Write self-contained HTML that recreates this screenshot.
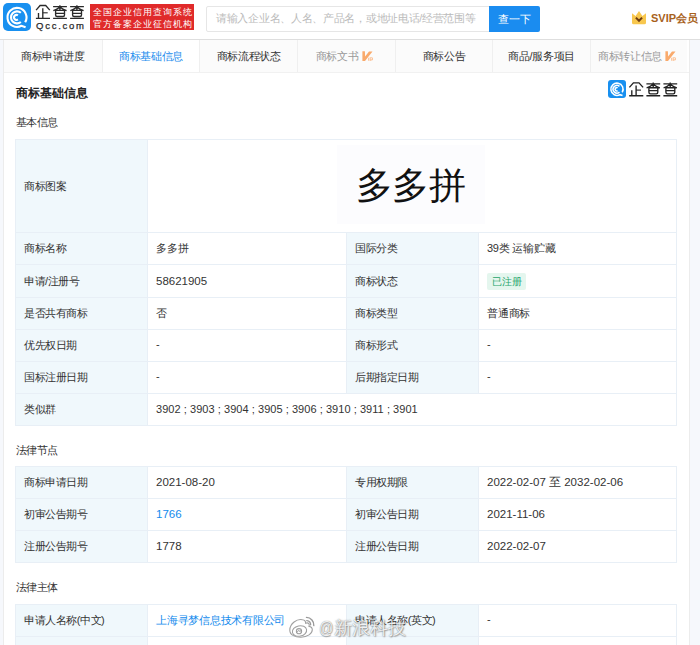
<!DOCTYPE html>
<html><head><meta charset="utf-8">
<style>
*{box-sizing:border-box;margin:0;padding:0}
html,body{width:700px;height:645px;overflow:hidden}
body{background:#f6f8fc;font-family:"Liberation Sans",sans-serif;color:#333;position:relative}
.abs{position:absolute}
#hdr{left:0;top:0;width:700px;height:40px;background:#fff;border-bottom:1px solid #dedede}
#logo{left:3px;top:3px;width:28px;height:28px;background:#1890f0;border-radius:5px}
#brand{left:36px;top:3px;font-size:15px;letter-spacing:1px;color:#222;line-height:17px}
#qcc{left:36px;top:21px;font-size:9.5px;letter-spacing:1.75px;color:#2a2a2a;line-height:10px;font-weight:normal;-webkit-text-stroke:0.25px #2a2a2a}
#red{left:90px;top:4px;width:104px;height:26px;background:#e02a2a;color:#fff;font-size:9px;line-height:12px;padding:2px 0 0 3px;letter-spacing:1px;white-space:nowrap}
#search{left:206px;top:6px;width:284px;height:26px;border:1px solid #e6e6e6;border-radius:2px 0 0 2px;font-size:10.7px;letter-spacing:-0.3px;color:#bbb;line-height:22.5px;padding-left:9px;white-space:nowrap;overflow:hidden}
#btn{left:489px;top:6px;width:51px;height:26px;background:#1a8cf0;border-radius:0 2px 2px 0;color:#fff;font-size:11px;line-height:26px;text-align:center}
#svip{left:651px;top:12px;font-size:11px;font-weight:bold;color:#a8621c;line-height:13px;white-space:nowrap}
#card{left:3px;top:40px;width:687px;height:620px;background:#fff;border-left:1px solid #ececec;border-right:1px solid #ececec}
#tabs{left:4px;top:40px;width:685px;height:33px;border-bottom:1px solid #f1f1f1;display:flex}
.tab{flex:none;width:97.65px;height:32px;background:#fbfbfb;border-left:1px solid #efefef;font-size:11px;letter-spacing:-0.35px;text-align:center;line-height:32px;color:#333;white-space:nowrap}
.tab:first-child{border-left:none}
.tab.on{background:#fff;color:#1a8ced}
.tab.dis{color:#999;padding-right:4px}
.v{display:inline-block;width:11px;height:10px;vertical-align:-1px;margin-left:3.5px}
#title{left:16px;top:85px;font-size:12px;font-weight:bold;color:#222;line-height:16px}
.sec{left:15.5px;font-size:11px;color:#333;line-height:14px;letter-spacing:-0.4px}
.tbl{left:15px;width:662px;border-top:1px solid #e8eff6;border-left:1px solid #e8eff6}
.row{display:flex;border-bottom:1px solid #e8eff6}
.c{border-right:1px solid #e8eff6;font-size:11px;letter-spacing:-0.45px;padding-left:8px;display:flex;align-items:center;white-space:nowrap;color:#333}
.lb{background:#f0f8fc;width:132px}
.vl{width:199px;padding-left:8px;letter-spacing:-0.25px}
.lb2{width:132px}
.vl2{flex:1;padding-left:8px;letter-spacing:-0.25px}
.link{color:#128bed}
.d{position:relative;top:-1.5px}
.n{font-size:11.5px;position:relative;top:-0.5px;letter-spacing:0}
.badge{background:#e4f6ee;color:#1fa56b;font-size:10px;padding:0 5px;height:17px;line-height:17px;border-radius:2px}
#wm{left:319px;top:615.5px;font-size:18px;line-height:24px;color:rgba(255,255,255,0.88);text-shadow:0 0 1.2px rgba(0,0,0,0.5),0.6px 0.8px 1.2px rgba(0,0,0,0.3);white-space:nowrap}
</style></head><body>
<div id="hdr" class="abs"></div>
<div id="logo" class="abs"><svg width="28" height="28" viewBox="3 3 28 28" style="display:block"><g fill="none" stroke="#fff" stroke-width="2.1" stroke-linecap="butt"><path d="M25.14 22.29 A9.5 9.5 0 1 0 21.46 25.79 L25.6 27.2"/><path d="M20.86 12.8 A6 6 0 1 0 20.86 22"/><path d="M17.93 15.35 A2.5 2.5 0 1 0 17.93 19.45"/></g></svg></div>
<svg class="abs" style="left:0;top:0" width="90" height="22" viewBox="0 0 90 22"><g fill="none" stroke="#2a2a2a" stroke-width="1.35"><path d="M36.1 10.1 L40.1 5.5 H45.7 L49.8 10.1"/><path d="M42.8 8.2 V18.4 M38.5 13 V18.4 M35.9 18.4 H50"/><path d="M42.8 12.8 H47.7" stroke-width="1.1"/></g><g fill="none" stroke="#2a2a2a" stroke-width="1.35"><path d="M53.1 6.6 H66.9 M59.9 5.2 V10.2 M59.2 7.4 Q56.5 9.6 53.3 10.6 M60.6 7.4 Q63.3 9.6 66.6 10.6 M55.6 10.4 H64.5 V15 Q64.5 16.5 63 16.5 H57.1 Q55.6 16.5 55.6 15 Z M55.6 13.3 H64.5 M53.1 18.4 H66.9"/><path transform="translate(17 0)" d="M53.1 6.6 H66.9 M59.9 5.2 V10.2 M59.2 7.4 Q56.5 9.6 53.3 10.6 M60.6 7.4 Q63.3 9.6 66.6 10.6 M55.6 10.4 H64.5 V15 Q64.5 16.5 63 16.5 H57.1 Q55.6 16.5 55.6 15 Z M55.6 13.3 H64.5 M53.1 18.4 H66.9"/></g></svg>
<div id="qcc" class="abs">Qcc.com</div>
<div id="red" class="abs">全国企业信用查询系统<br>官方备案企业征信机构</div>
<div id="search" class="abs">请输入企业名、人名、产品名，或地址电话/经营范围等</div>
<div id="btn" class="abs">查一下</div>
<svg class="abs" style="left:631px;top:10px" width="16" height="15" viewBox="0 0 16 15"><path d="M1 3.2 L4.6 6 L8 1 L11.4 6 L15 3.2 L15 12.8 Q15 14.3 13.5 14.3 L2.5 14.3 Q1 14.3 1 12.8 Z" fill="#f8c74e"/><path d="M4.9 7.6 L8 10.8 L11.1 7.6" fill="none" stroke="#6e3d12" stroke-width="2"/></svg>
<div id="svip" class="abs">SVIP会员</div>

<div id="card" class="abs"></div>
<div id="tabs" class="abs">
<div class="tab">商标申请进度</div>
<div class="tab on">商标基础信息</div>
<div class="tab">商标流程状态</div>
<div class="tab dis" style="padding-right:4px">商标文书<svg class="v" viewBox="0 0 11 10"><path d="M0.4 0.3 L2.9 0.3 L3.1 5.5 L7 0.6 L10.5 0.6 L3 10 L0.4 10 Z" fill="#f9aa6c"/><path d="M6.6 6.8 V9.8 M8.2 9.9 V6.8 H9.6 Q10.6 6.8 10.6 7.9 Q10.6 8.9 9.6 8.9 H8.2" fill="none" stroke="#fbc59c" stroke-width="1.1"/></svg></div>
<div class="tab">商标公告</div>
<div class="tab">商品/服务项目</div>
<div class="tab dis">商标转让信息<svg class="v" viewBox="0 0 11 10"><path d="M0.4 0.3 L2.9 0.3 L3.1 5.5 L7 0.6 L10.5 0.6 L3 10 L0.4 10 Z" fill="#f9aa6c"/><path d="M6.6 6.8 V9.8 M8.2 9.9 V6.8 H9.6 Q10.6 6.8 10.6 7.9 Q10.6 8.9 9.6 8.9 H8.2" fill="none" stroke="#fbc59c" stroke-width="1.1"/></svg></div>
</div>

<div id="title" class="abs">商标基础信息</div>
<div class="abs" style="left:608px;top:80px;width:18px;height:18px;background:#1890f0;border-radius:3px"><svg width="18" height="18" viewBox="3 3 28 28" style="display:block"><g fill="none" stroke="#fff" stroke-width="2.4"><path d="M25.14 22.29 A9.5 9.5 0 1 0 21.46 25.79 L25.6 27.2"/><path d="M20.86 12.8 A6 6 0 1 0 20.86 22"/><path d="M17.93 15.35 A2.5 2.5 0 1 0 17.93 19.45"/></g></svg></div>
<svg class="abs" style="left:600px;top:76px" width="90" height="26" viewBox="0 0 90 26"><g transform="translate(-6.7 1.3)"><g fill="none" stroke="#222" stroke-width="1.35"><path d="M36.1 10.1 L40.1 5.5 H45.7 L49.8 10.1"/><path d="M42.8 8.2 V18.4 M38.5 13 V18.4 M35.9 18.4 H50"/><path d="M42.8 12.8 H47.7" stroke-width="1.1"/></g><g fill="none" stroke="#222" stroke-width="1.35"><path d="M53.1 6.6 H66.9 M59.9 5.2 V10.2 M59.2 7.4 Q56.5 9.6 53.3 10.6 M60.6 7.4 Q63.3 9.6 66.6 10.6 M55.6 10.4 H64.5 V15 Q64.5 16.5 63 16.5 H57.1 Q55.6 16.5 55.6 15 Z M55.6 13.3 H64.5 M53.1 18.4 H66.9"/><path transform="translate(17 0)" d="M53.1 6.6 H66.9 M59.9 5.2 V10.2 M59.2 7.4 Q56.5 9.6 53.3 10.6 M60.6 7.4 Q63.3 9.6 66.6 10.6 M55.6 10.4 H64.5 V15 Q64.5 16.5 63 16.5 H57.1 Q55.6 16.5 55.6 15 Z M55.6 13.3 H64.5 M53.1 18.4 H66.9"/></g></g></svg>

<div class="sec abs" style="top:115px">基本信息</div>
<div class="tbl abs" style="top:139px">
 <div class="row" style="height:93px"><div class="c lb">商标图案</div><div class="c" style="flex:1;justify-content:center;padding:0"><div style="margin:-3px 0 0 -3px;width:148px;height:79px;padding-top:2px;background:#fcfcfe;display:flex;align-items:center;justify-content:center;font-size:37px;color:#111;font-weight:300">多多拼</div></div></div>
 <div class="row" style="height:32px"><div class="c lb">商标名称</div><div class="c vl">多多拼</div><div class="c lb lb2">国际分类</div><div class="c vl2">39类 运输贮藏</div></div>
 <div class="row" style="height:33px"><div class="c lb">申请/注册号</div><div class="c vl"><span class="n">58621905</span></div><div class="c lb lb2">商标状态</div><div class="c vl2"><span class="badge">已注册</span></div></div>
 <div class="row" style="height:32px"><div class="c lb">是否共有商标</div><div class="c vl">否</div><div class="c lb lb2">商标类型</div><div class="c vl2">普通商标</div></div>
 <div class="row" style="height:32px"><div class="c lb">优先权日期</div><div class="c vl"><span class="d">-</span></div><div class="c lb lb2">商标形式</div><div class="c vl2"><span class="d">-</span></div></div>
 <div class="row" style="height:32px"><div class="c lb">国标注册日期</div><div class="c vl"><span class="d">-</span></div><div class="c lb lb2">后期指定日期</div><div class="c vl2"><span class="d">-</span></div></div>
 <div class="row" style="height:32px"><div class="c lb">类似群</div><div class="c vl2" style="flex:1"><span class="n" style="font-size:11px;letter-spacing:0.05px">3902 ; 3903 ; 3904 ; 3905 ; 3906 ; 3910 ; 3911 ; 3901</span></div></div>
</div>

<div class="sec abs" style="top:443px">法律节点</div>
<div class="tbl abs" style="top:466px">
 <div class="row" style="height:32px"><div class="c lb">商标申请日期</div><div class="c vl"><span class="n">2021-08-20</span></div><div class="c lb lb2">专用权期限</div><div class="c vl2"><span class="n">2022-02-07 至 2032-02-06</span></div></div>
 <div class="row" style="height:32px"><div class="c lb">初审公告期号</div><div class="c vl link"><span class="n">1766</span></div><div class="c lb lb2">初审公告日期</div><div class="c vl2"><span class="n">2021-11-06</span></div></div>
 <div class="row" style="height:32px"><div class="c lb">注册公告期号</div><div class="c vl"><span class="n">1778</span></div><div class="c lb lb2">注册公告日期</div><div class="c vl2"><span class="n">2022-02-07</span></div></div>
</div>

<div class="sec abs" style="top:580px">法律主体</div>
<div class="tbl abs" style="top:604px">
 <div class="row" style="height:32px"><div class="c lb">申请人名称(中文)</div><div class="c vl link">上海寻梦信息技术有限公司</div><div class="c lb lb2">申请人名称(英文)</div><div class="c vl2"><span class="d">-</span></div></div>
 <div class="row" style="height:32px"><div class="c lb"></div><div class="c vl"></div><div class="c lb lb2"></div><div class="c vl2"></div></div>
</div>

<svg class="abs" style="left:286px;top:612px" width="32" height="30" viewBox="286 612 32 30"><g fill="rgba(255,255,255,0.8)" stroke="#a0a0a0" stroke-width="1.1"><path d="M302.5 619.8 C297 618.5 289.8 623.5 289.8 630.2 C289.8 635.2 295.5 637.3 301 637.2 C307.5 637 312.3 633.6 312.3 629.8 C312.3 627.6 310.6 626.6 309 626.4 C309.8 624 308.8 622.2 305.6 623.2 C305.8 621 304.8 620.2 302.5 619.8 Z"/><ellipse cx="299.5" cy="631" rx="7.2" ry="5.2" transform="rotate(-12 299.5 631)"/><circle cx="299" cy="631.2" r="2.6"/></g><g fill="none" stroke="#9a9a9a" stroke-width="1.4" stroke-linecap="round"><path d="M306.5 617.4 A7.5 7.5 0 0 1 313.8 625.6"/><path d="M306.8 620.6 A4.2 4.2 0 0 1 310.6 624.8"/></g><path d="M297.2 632.2 L298.6 630.4 L300.2 631.6 L301.2 630" fill="none" stroke="#888" stroke-width="0.8"/></svg>
<div id="wm" class="abs"><span style="display:inline-block;transform:scaleX(0.8);transform-origin:0 50%;margin-right:-3px">@</span>新浪科技</div>
</body></html>
